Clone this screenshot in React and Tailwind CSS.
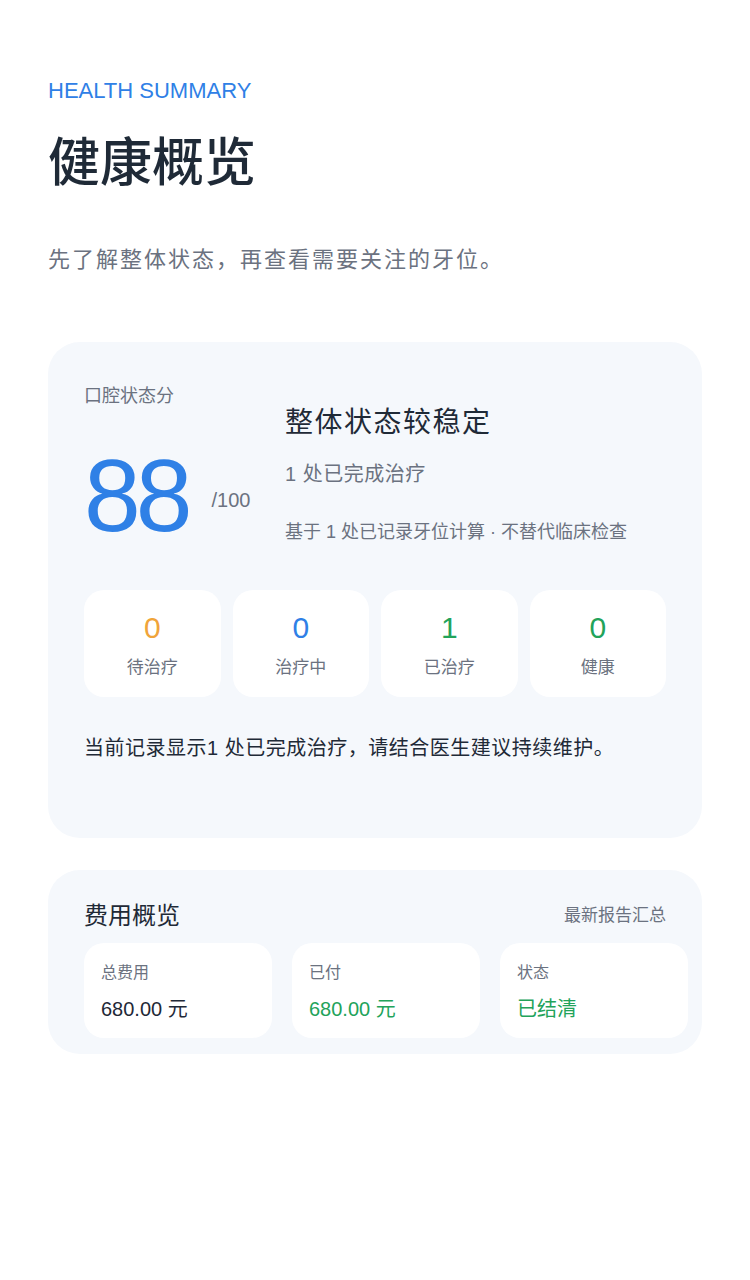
const stats = [
  { n: 0, label: '待治疗', color: 'text-[#f0a43a]' },
  { n: 0, label: '治疗中', color: 'text-[#2f80e6]' },
  { n: 1, label: '已治疗', color: 'text-[#22a35a]' },
  { n: 0, label: '健康', color: 'text-[#22a35a]' },
]

const fees = [
  { label: '总费用', value: '680.00 元', color: 'text-[#1f2937]' },
  { label: '已付', value: '680.00 元', color: 'text-[#22a35a]' },
  { label: '状态', value: '已结清', color: 'text-[#22a35a]' },
]

export default function App() {
  return (
    <div className="min-h-[1280px] bg-white px-12 pt-[78px]"
      style={{ fontFamily: '"Liberation Sans", "Noto Sans CJK SC", sans-serif' }}>
      <div className="text-[22px] leading-[26px] text-[#2f80e6]">HEALTH SUMMARY</div>
      <h1 className="mt-[29px] text-[52px] leading-[60px] font-medium text-[#1f2a37]">健康概览</h1>
      <p className="mt-[52px] text-[22px] leading-[30px] tracking-[2px] text-[#6b7280]">
        先了解整体状态，再查看需要关注的牙位。
      </p>

      <div className="mt-[67px] rounded-[32px] bg-[#f5f8fc] px-9 pt-[42px] pb-[77px]">
        <div className="flex">
          <div className="w-[201px] shrink-0">
            <div className="text-[18px] leading-[24px] text-[#6b7280]">口腔状态分</div>
            <div className="mt-[38px] flex items-center">
              <span className="text-[102px] leading-[100px] tracking-[-5px] text-[#2f80e6]">88</span>
              <span className="ml-[24px] mt-[8px] text-[20px] text-[#6b7280]">/100</span>
            </div>
          </div>
          <div className="pt-[22px]">
            <div className="text-[28px] leading-[34px] tracking-[1.5px] text-[#1f2a37]">整体状态较稳定</div>
            <div className="mt-[21px] text-[20px] leading-[26px] tracking-[0.5px] text-[#6b7280]">1 处已完成治疗</div>
            <div className="mt-[33px] text-[18px] leading-[24px] text-[#6b7280]">基于 1 处已记录牙位计算 · 不替代临床检查</div>
          </div>
        </div>

        <div className="mt-[44px] grid grid-cols-4 gap-3">
          {stats.map((s, i) => (
            <div key={i} className="flex h-[107px] flex-col items-center rounded-[20px] bg-white pt-[20px]">
              <div className={`text-[30px] leading-[36px] ${s.color}`}>{s.n}</div>
              <div className="mt-[10px] text-[17px] leading-[24px] text-[#6b7280]">{s.label}</div>
            </div>
          ))}
        </div>

        <p className="mt-[38px] text-[20px] leading-[26px] tracking-[0.5px] text-[#1f2a37]">
          当前记录显示1 处已完成治疗，请结合医生建议持续维护。
        </p>
      </div>

      <div className="mt-[32px] rounded-[32px] bg-[#f5f8fc] px-9 pt-[29px] pb-4">
        <div className="flex items-center justify-between">
          <div className="text-[24px] leading-[34px] text-[#1f2a37]">费用概览</div>
          <div className="text-[17px] text-[#6b7280]">最新报告汇总</div>
        </div>
        <div className="mt-[10px] flex gap-5">
          {fees.map((f, i) => (
            <div key={i} className="h-[95px] w-[188px] shrink-0 rounded-[20px] bg-white px-[17px] pt-[19px]">
              <div className="text-[16px] leading-[22px] text-[#6b7280]">{f.label}</div>
              <div className={`mt-[12px] text-[20px] leading-[26px] ${f.color}`}>{f.value}</div>
            </div>
          ))}
        </div>
      </div>
    </div>
  )
}
